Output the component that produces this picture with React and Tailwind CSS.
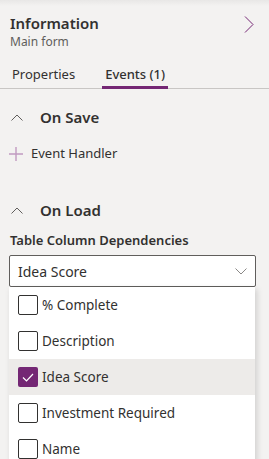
import React from "react";

const items = [
  { label: "% Complete", checked: false },
  { label: "Description", checked: false },
  { label: "Idea Score", checked: true },
  { label: "Investment Required", checked: false },
  { label: "Name", checked: false },
];

function ChevronUp() {
  return (
    <svg width="12" height="7" viewBox="0 0 12 7" fill="none">
      <path d="M0.5 6.5 L6 1 L11.5 6.5" stroke="#605e5c" strokeWidth="1" />
    </svg>
  );
}

export default function App() {
  return (
    <div
      className="w-[269px] h-[459px] overflow-hidden bg-[#f3f2f1] text-[#323130] relative"
      style={{ fontFamily: '"Segoe UI", "Noto Sans", "Open Sans", sans-serif' }}
    >
      <div className="absolute top-0 left-0 right-0 h-[6px] bg-gradient-to-b from-[#e8e7e6] to-[#f3f2f1]" />
      <div className="flex justify-between items-start pl-[10px] pr-[15px] pt-[12px]">
        <div className="flex flex-col">
          <div className="text-[15px] font-semibold leading-[22px]">Information</div>
          <div className="text-[12px] leading-[16px] text-[#605e5c]">Main form</div>
        </div>
        <svg width="10" height="17" viewBox="0 0 10 17" className="mt-[4px]" fill="none">
          <path d="M1 0.5 L9 8.5 L1 16.5" stroke="#742774" strokeWidth="1" />
        </svg>
      </div>
      <div className="flex mt-[14px] border-b border-[#c8c6c4] pl-[12px]">
        <div className="text-[13px] leading-[20px] pb-[4px] text-[#323130] mr-[27px]">Properties</div>
        <div className="relative text-[13px] leading-[20px] pb-[4px] font-medium px-[3px]">
          Events (1)
          <div className="absolute left-0 right-0 bottom-[-1px] h-[3px] bg-[#742774]" />
        </div>
      </div>
      <div className="flex items-center mt-[16px] h-[24px] pl-[11px]">
        <ChevronUp />
        <span className="ml-[17px] text-[15px] font-semibold">On Save</span>
      </div>
      <div className="flex items-center mt-[15px] h-[20px] pl-[9px]">
        <svg width="14" height="14" viewBox="0 0 14 14" fill="none">
          <path d="M7 0 V14 M0 7 H14" stroke="#c19bc1" strokeWidth="1.4" />
        </svg>
        <span className="ml-[8px] text-[13px]">Event Handler</span>
      </div>
      <div className="flex items-center mt-[34px] h-[24px] pl-[11px]">
        <ChevronUp />
        <span className="ml-[17px] text-[15px] font-semibold">On Load</span>
      </div>
      <div className="mt-[9px] pl-[10px] text-[13px] font-semibold leading-[18px]">
        Table Column Dependencies
      </div>
      <div className="mt-[6px] ml-[9px] w-[247px] flex flex-col">
        <div className="h-[32px] border border-[#605e5c] rounded-[2px] bg-white flex items-center justify-between pl-[8px] pr-[8px]">
          <span className="text-[14px]">Idea Score</span>
          <svg width="12" height="7" viewBox="0 0 12 7" fill="none">
            <path d="M0.5 0.5 L6 6 L11.5 0.5" stroke="#8a8886" strokeWidth="1" />
          </svg>
        </div>
        <div className="bg-white shadow-[2px_2px_6px_rgba(0,0,0,0.15)] w-[246px]">
          {items.map((it) => (
            <div
              key={it.label}
              className={`h-[36px] flex items-center pl-[9px] ${it.checked ? "bg-[#edebe9]" : ""}`}
            >
              {it.checked ? (
                <div className="w-[20px] h-[20px] rounded-[2px] bg-[#742774] flex items-center justify-center">
                  <svg width="12" height="9" viewBox="0 0 12 9" fill="none">
                    <path d="M1 4.5 L4.5 8 L11 1" stroke="#ffffff" strokeWidth="1.2" />
                  </svg>
                </div>
              ) : (
                <div className="w-[20px] h-[20px] rounded-[2px] border border-[#323130] bg-white" />
              )}
              <span className="ml-[4px] text-[13.5px]">{it.label}</span>
            </div>
          ))}
        </div>
      </div>
    </div>
  );
}
